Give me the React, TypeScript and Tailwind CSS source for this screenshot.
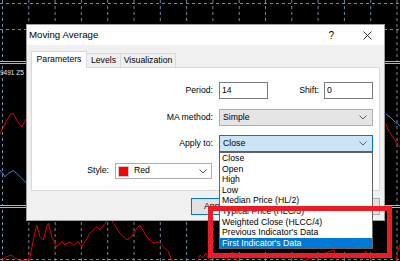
const APPLY_ITEMS = [
  'Close',
  'Open',
  'High',
  'Low',
  'Median Price (HL/2)',
  'Typical Price (HLC/3)',
  'Weighted Close (HLCC/4)',
  "Previous Indicator's Data",
  "First Indicator's Data",
];

function Chevron() {
  return (
    <svg width="8" height="5" viewBox="0 0 8 5" className="shrink-0">
      <path d="M0.5 0.5 L4 4 L7.5 0.5" fill="none" stroke="#5a5a5a" strokeWidth="1" />
    </svg>
  );
}

function ChartBackground() {
  const xs = Array.from({ length: 16 }, (_, i) => 2.5 + i * 26.3);
  return (
    <svg className="absolute inset-0" width="400" height="261" viewBox="0 0 400 261">
      {xs.map((x) => (
        <line key={x} x1={x} y1={0} x2={x} y2={261} stroke="#778899" strokeWidth="1" strokeDasharray="3 3" />
      ))}
      {[3.5, 29.5, 259.5].map((y) => (
        <line key={y} x1={0} y1={y} x2={400} y2={y} stroke="#778899" strokeWidth="1" strokeDasharray="3 3" />
      ))}
      {/* sub window separators */}
      <rect x="0" y="61" width="400" height="4" fill="#000" />
      <line x1="0" y1="61.5" x2="400" y2="61.5" stroke="#b4b4b4" />
      <line x1="0" y1="63.5" x2="400" y2="63.5" stroke="#b4b4b4" />
      <rect x="0" y="205" width="400" height="4" fill="#000" />
      <line x1="0" y1="205.5" x2="400" y2="205.5" stroke="#b4b4b4" />
      <line x1="0" y1="207.5" x2="400" y2="207.5" stroke="#b4b4b4" />
      <text x="0" y="75" fontSize="6.5" fill="#e6e6e6" fontFamily="Liberation Sans, sans-serif">
        9491 Z5
      </text>
      {/* middle window lines */}
      <polyline
        points="0,134 3,128 7,120 10,115 13,113 18,122 22,127 26,119"
        fill="none"
        stroke="#e00000"
        strokeWidth="1"
      />
      <polyline
        points="0,170 5,176.7 8.3,173.3 13.3,170.7 16.7,173.3 20,176.7 25,181.7 28,184"
        fill="none"
        stroke="#1e90ff"
        strokeWidth="1"
      />
      <polyline points="386,114 390,117 394,121 400,126" fill="none" stroke="#1e90ff" strokeWidth="1" />
      <polyline points="386,124 388,130 393,137 397,143 400,147" fill="none" stroke="#e00000" strokeWidth="1" />
      {/* bottom window line */}
      <polyline
        points="0,262 4,259 6.7,256.7 11.7,255 15,258.3 20,260.7 26.7,260.7 30,256.7 33.3,240 36.7,225 40,236.7 43.3,240 46.7,226.7 48.3,223.3 51.7,236.7 56.7,246.7 61.7,241.7 65,245 70,241.7 73.3,245 78.3,241.7 81.7,246.7 85,241.7 90,233.3 96.7,226.7 100,230 105,223.3 107.3,220 110,215 113.3,223.3 120,233.3 126.7,240 131.7,236.7 136.7,228.3 140,225 146.7,236.7 153.3,243.3 158.3,241.7 163.3,246.7 168.3,251.7 171.7,260 173.3,265 196,265 200,255 203,258 206,253 210,262 226,262 232,252 238,262 300,262 334,250 337,262 360,262 366,251 372,262 396,262 398,250 400,245"
        fill="none"
        stroke="#e00000"
        strokeWidth="1"
      />
    </svg>
  );
}

export default function App() {
  return (
    <div className="relative w-[400px] h-[261px] overflow-hidden bg-black font-['Liberation_Sans',Arial,sans-serif] text-[8.7px] text-black">
      <ChartBackground />

      {/* Dialog window */}
      <div className="absolute left-[26px] top-[24px] w-[359px] h-[197px] flex flex-col border border-[#a0a0a0] bg-[#f0f0f0]">
        {/* Title bar */}
        <div className="h-[20px] shrink-0 bg-white flex items-center pl-[2px] pr-[12px]">
          <span className="flex-1 text-[9.7px]">Moving Average</span>
          <span className="text-[10px] mr-[29px]">?</span>
          <svg width="9" height="9" viewBox="0 0 9 9">
            <path d="M0.5 0.5 L8.5 8.5 M8.5 0.5 L0.5 8.5" stroke="#222" strokeWidth="0.9" fill="none" />
          </svg>
        </div>

        <div className="flex-1 flex flex-col px-[4px] pt-[6px]">
          {/* Tabs */}
          <div className="flex items-end h-[16px] relative z-10">
            <div className="w-[56px] h-[17px] -mb-[1px] bg-white border border-b-0 border-[#d9d9d9] flex items-center justify-center">
              Parameters
            </div>
            <div className="w-[34px] h-[14px] bg-[#f0f0f0] border border-l-0 border-b-0 border-[#d9d9d9] flex items-center justify-center">
              Levels
            </div>
            <div className="w-[55px] h-[14px] bg-[#f0f0f0] border border-l-0 border-b-0 border-[#d9d9d9] flex items-center justify-center">
              Visualization
            </div>
          </div>

          {/* Tab panel */}
          <div className="h-[124px] bg-white border border-[#d9d9d9] flex flex-col pt-[14px]">
            <div className="flex items-center h-[17px]">
              <span className="w-[181px] text-right">Period:</span>
              <div className="ml-[6px] w-[49px] h-[17px] border border-[#7a7a7a] bg-white flex items-center pl-[2px]">14</div>
              <span className="w-[51px] text-right">Shift:</span>
              <div className="ml-[5px] w-[49px] h-[17px] border border-[#7a7a7a] bg-white flex items-center pl-[2px]">0</div>
            </div>

            <div className="flex items-center h-[17px] mt-[10px]">
              <span className="w-[181px] text-right">MA method:</span>
              <div className="ml-[6px] w-[154px] h-[17px] border border-[#adadad] bg-[#e5e5e5] flex items-center pl-[3px] pr-[5px]">
                <span className="flex-1">Simple</span>
                <Chevron />
              </div>
            </div>

            <div className="flex items-center h-[17px] mt-[9px] relative z-20">
              <span className="w-[181px] text-right">Apply to:</span>
              <div className="relative ml-[6px] w-[154px] h-[17px] border border-[#0078d7] bg-[#cce4f7] flex items-center pl-[3px] pr-[5px]">
                <span className="flex-1">Close</span>
                <Chevron />
                {/* open list */}
                <div className="absolute -left-[1px] top-[16px] w-[154px] border border-[#646464] bg-white flex flex-col">
                  {APPLY_ITEMS.map((item, i) =>
                    i === APPLY_ITEMS.length - 1 ? (
                      <div key={item} className="h-[10.6px] leading-[10.6px] pl-[2px] bg-[#0078d7] text-white whitespace-nowrap">
                        {item}
                      </div>
                    ) : (
                      <div key={item} className="h-[10.6px] leading-[10.6px] pl-[2px] whitespace-nowrap">
                        {item}
                      </div>
                    )
                  )}
                </div>
              </div>
            </div>

            <div className="flex items-center h-[16px] mt-[11px]">
              <span className="w-[77px] text-right">Style:</span>
              <div className="ml-[6px] w-[97px] h-[16px] border border-[#adadad] bg-white flex items-center pl-[2px] pr-[4px]">
                <span className="w-[11px] h-[11px] bg-[#ff0000] border border-[#c8c8c8]" />
                <span className="flex-1 ml-[5px]">Red</span>
                <Chevron />
              </div>
            </div>
          </div>

          {/* Buttons */}
          <div className="flex justify-end gap-[3px] mt-[7px]">
            <button className="w-[61px] h-[17px] border border-[#0078d7] bg-[#e1e1e1] flex items-center pl-[12px]">
              Apply
            </button>
            <button className="w-[61px] h-[17px] border border-[#adadad] bg-[#e1e1e1] flex items-center justify-center">
              OK
            </button>
            <button className="w-[61px] h-[17px] border border-[#adadad] bg-[#e1e1e1] flex items-center justify-center">
              Cancel
            </button>
          </div>
        </div>
      </div>

      {/* Highlight frame */}
      <div className="absolute left-[208px] top-[206px] w-[184px] h-[52px] border-[5px] border-[#ec1c24] z-30" />
    </div>
  );
}
